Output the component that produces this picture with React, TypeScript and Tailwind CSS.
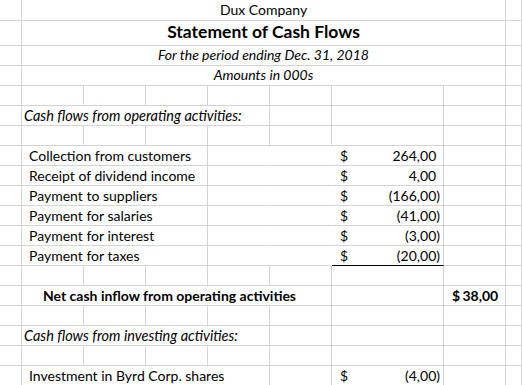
import React from "react";

const SPAN: Record<number, string> = {
  1: "col-span-1",
  2: "col-span-2",
  3: "col-span-3",
  4: "col-span-4",
  5: "col-span-5",
  6: "col-span-6",
  7: "col-span-7",
};

type CellProps = {
  span?: number;
  noRight?: boolean;
  className?: string;
  children?: React.ReactNode;
};

function Cell({ span = 1, noRight = false, className = "", children }: CellProps) {
  return (
    <div
      className={`${SPAN[span]} flex items-end overflow-visible whitespace-nowrap border-b border-b-[#d4d4d4] ${
        noRight ? "border-r border-r-transparent" : "border-r border-r-[#d4d4d4]"
      } ${className}`}
    >
      {children}
    </div>
  );
}

function Row({ h = "h-[20px]", children }: { h?: string; children: React.ReactNode }) {
  return (
    <div className={`grid grid-cols-[22px_62px_62px_62px_62px_62px_112px_62px_16px] ${h}`}>
      {children}
    </div>
  );
}

function EmptyRow() {
  return (
    <Row>
      <Cell />
      <Cell />
      <Cell />
      <Cell />
      <Cell />
      <Cell />
      <Cell />
      <Cell />
      <Cell />
    </Row>
  );
}

function Acct({ value, neg = false, bold = false }: { value: string; neg?: boolean; bold?: boolean }) {
  return (
    <div
      className={`flex w-full justify-between pl-[8px] pr-[3px] pb-[1px] text-[14px] leading-[16px] ${
        bold ? "font-bold" : ""
      }`}
    >
      <span>$</span>
      <span>
        {neg ? `(${value})` : value}
        {!neg && <span className="invisible">)</span>}
      </span>
    </div>
  );
}

const items: [string, string, boolean][] = [
  ["Collection from customers", "264,00", false],
  ["Receipt of dividend income", "4,00", false],
  ["Payment to suppliers", "166,00", true],
  ["Payment for salaries", "41,00", true],
  ["Payment for interest", "3,00", true],
  ["Payment for taxes", "20,00", true],
];

export default function App() {
  return (
    <div
      className="w-[522px] h-[385px] overflow-hidden bg-white text-black"
      style={{ fontFamily: "Lato, 'Open Sans', sans-serif" }}
    >
      <Row h="h-[21px]">
        <Cell />
        <Cell span={7} className="justify-center pb-[2px] text-[14px] leading-[16px]">
          Dux Company
        </Cell>
        <Cell />
      </Row>
      <Row h="h-[25px]">
        <Cell />
        <Cell span={7} className="justify-center pb-[3px] text-[17.5px] leading-[20px] font-bold">
          Statement of Cash Flows
        </Cell>
        <Cell />
      </Row>
      <Row>
        <Cell />
        <Cell span={7} className="justify-center pb-[2px] text-[14px] leading-[16px] italic">
          For the period ending Dec. 31, 2018
        </Cell>
        <Cell />
      </Row>
      <Row>
        <Cell />
        <Cell span={7} className="justify-center pb-[2px] text-[14px] leading-[16px] italic">
          Amounts in 000s
        </Cell>
        <Cell />
      </Row>
      <EmptyRow />
      <Row>
        <Cell />
        <Cell span={4} className="pl-[2px] pb-[1px] text-[14.5px] leading-[16px] italic">
          Cash flows from operating activities:
        </Cell>
        <Cell />
        <Cell />
        <Cell />
        <Cell />
      </Row>
      <EmptyRow />
      {items.map(([label, value, neg], i) => (
        <Row key={label}>
          <Cell />
          <Cell span={3} className="pl-[7px] pb-[1px] text-[14px] leading-[16px]">
            {label}
          </Cell>
          <Cell noRight />
          <Cell noRight />
          <Cell className={i === items.length - 1 ? "border-b-black" : ""}>
            <Acct value={value} neg={neg} />
          </Cell>
          <Cell />
          <Cell />
        </Row>
      ))}
      <EmptyRow />
      <Row>
        <Cell />
        <Cell span={5} className="pl-[21px] pb-[1px] text-[14px] leading-[16px] font-bold">
          Net cash inflow from operating activities
        </Cell>
        <Cell />
        <Cell>
          <Acct value="38,00" bold />
        </Cell>
        <Cell />
      </Row>
      <EmptyRow />
      <Row>
        <Cell />
        <Cell span={4} className="pl-[2px] pb-[1px] text-[14.5px] leading-[16px] italic">
          Cash flows from investing activities:
        </Cell>
        <Cell />
        <Cell />
        <Cell />
        <Cell />
      </Row>
      <EmptyRow />
      <Row>
        <Cell />
        <Cell span={4} className="pl-[7px] pb-[1px] text-[14px] leading-[16px]">
          Investment in Byrd Corp. shares
        </Cell>
        <Cell />
        <Cell>
          <Acct value="4,00" neg />
        </Cell>
        <Cell />
        <Cell />
      </Row>
    </div>
  );
}
